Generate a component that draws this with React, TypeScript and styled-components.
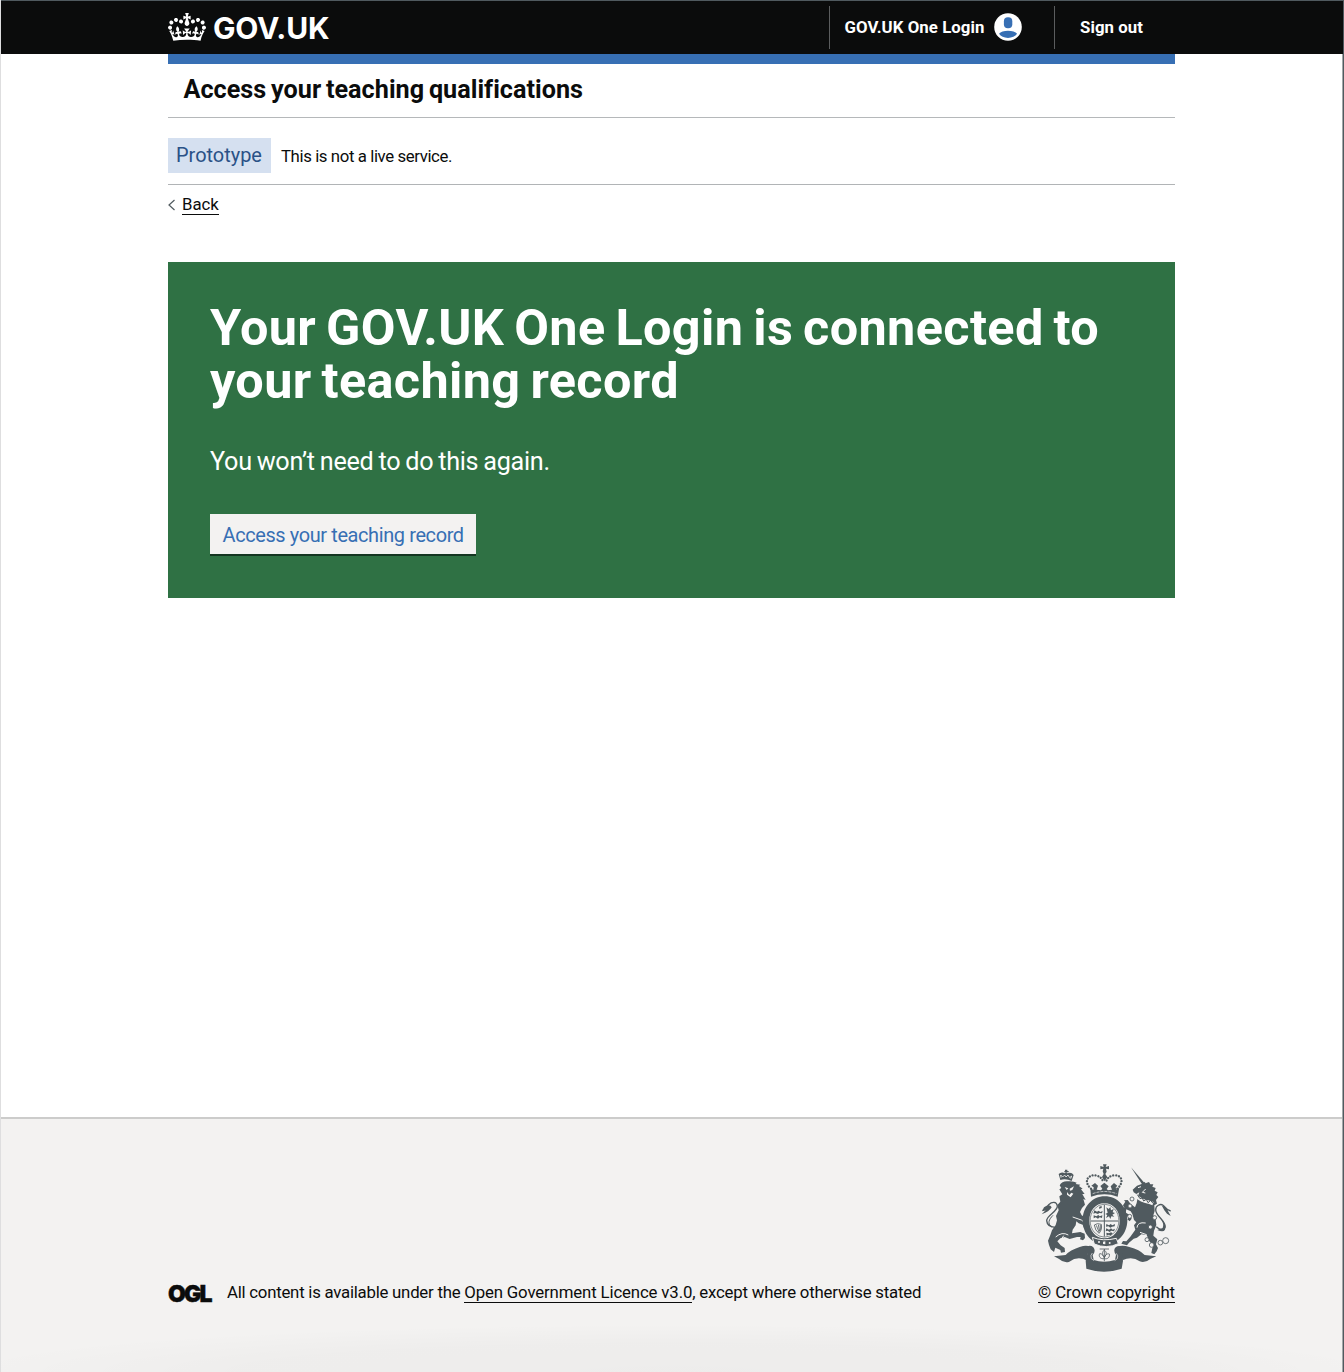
import React from 'react';
import styled, { createGlobalStyle } from 'styled-components';

const GlobalStyle = createGlobalStyle`
  *, *::before, *::after { box-sizing: border-box; }
  body {
    margin: 0;
    background: #fff;
    color: #0b0c0c;
    font-family: Roboto, "Noto Sans", sans-serif;
  }
`;

const Page = styled.div`
  display: flex;
  flex-direction: column;
  height: 1372px;
  padding-right: 1px;
  overflow: hidden;
  background: linear-gradient(to left, #a3a7a9 1px, #fff 1px);
  border-left: 1px solid #dededf;
  border-right: 1px solid #505a5f;
`;

const Container = styled.div`
  width: 1007px;
  margin-left: 167px;
`;

const Header = styled.header`
  height: 54px;
  margin: 0 -1px;
  padding-left: 1px;
  background: #0b0c0c;
  border-top: 1px solid #505a5f;
`;

const HeaderRow = styled(Container)`
  display: flex;
  height: 53px;
  padding-top: 5px;
`;

const Logo = styled.a`
  display: flex;
  align-items: center;
  height: 41px;
  margin-right: auto;
  color: #fff;

  svg { display: block; fill: currentColor; }
`;

const LogoText = styled.span`
  margin-left: 7px;
  margin-top: 2px;
  font-family: Inter, sans-serif;
  font-size: 30px;
  font-weight: 650;
  line-height: 40px;
  letter-spacing: -0.2px;
`;

const NavItem = styled.a<{ $width: number; $indent: number }>`
  display: flex;
  align-items: center;
  width: ${p => p.$width}px;
  height: 43px;
  padding-bottom: 1px;
  padding-left: ${p => p.$indent}px;
  border-left: 1px solid #5b5d5e;
  color: #fff;
  font-size: 16.8px;
  font-weight: 700;
  letter-spacing: 0.06px;

  svg { margin-left: 10px; }
`;

const ServiceBar = styled(Container)`
  height: 64px;
  padding: 10px 16px 0 15.5px;
  border-top: 10px solid #376fb4;
  border-bottom: 1px solid #b5b8ba;
`;

const ServiceName = styled.div`
  font-size: 25.2px;
  font-weight: 700;
  line-height: 31px;
  letter-spacing: 0.02px;
  word-spacing: -1.5px;
`;

const PhaseBanner = styled(Container)`
  display: flex;
  align-items: center;
  height: 67px;
  padding-top: 9px;
  border-bottom: 1px solid #b1b4b6;
`;

const Tag = styled.strong`
  height: 35px;
  width: 102.5px;
  margin-right: 10.5px;
  padding-left: 8px;
  background: #d5e0f0;
  color: #2a5287;
  font-size: 19.95px;
  font-weight: 400;
  line-height: 35px;
`;

const SmallText = styled.span<{ $spacing: number }>`
  font-size: 16.8px;
  line-height: 21px;
  letter-spacing: ${p => p.$spacing}px;
`;

const PhaseText = styled(SmallText)`
  padding-top: 2px;
`;

const BackLink = styled(Container)`
  display: flex;
  align-items: flex-start;
  height: 77px;
  padding-top: 9px;

  svg { margin-top: 5px; margin-right: 6px; }
`;

const Underlined = styled(SmallText)`
  display: inline-block;
  border-bottom: 1px solid #0b0c0c;
  line-height: 20px;
`;

const Panel = styled(Container)`
  height: 336px;
  padding: 40px 42px 0;
  background: #2f7144;
  color: #fff;
`;

const PanelTitle = styled.h1`
  margin: 0;
  font-size: 50.4px;
  font-weight: 700;
  line-height: 52.5px;
  letter-spacing: 0.37px;
  word-spacing: -3px;
`;

const PanelBody = styled.p`
  margin: 37px 0 0;
  font-size: 25.2px;
  line-height: 36px;
  letter-spacing: -0.28px;
  word-spacing: -1px;
`;

const StartButton = styled.button`
  display: block;
  width: 266px;
  height: 40px;
  margin: 34px 0 0;
  padding: 0 0 0 12.5px;
  border: 0;
  background: #f3f2f1;
  box-shadow: 0 2px 0 #143521;
  color: #376fb4;
  font: 400 19.95px/42px Roboto, sans-serif;
  letter-spacing: -0.38px;
  text-align: left;
`;

const Footer = styled.footer`
  flex: none;
  height: 255px;
  margin-top: auto;
  border-top: 2px solid #cccccb;
  background:
    radial-gradient(ellipse 720px 48px at 50% 100%, rgba(0, 0, 0, 0.025), rgba(0, 0, 0, 0.018) 60%, transparent),
    #f3f2f1;
`;

const FooterRow = styled(Container)`
  display: flex;
  align-items: flex-end;
  height: 184px;
`;

const Ogl = styled.span`
  width: 59px;
  font-family: Inter, sans-serif;
  font-size: 23px;
  font-weight: 900;
  line-height: 18px;
  letter-spacing: -1.8px;
  -webkit-text-stroke: 0.4px #0b0c0c;
`;

const Licence = styled.div`
  display: flex;
  margin-right: auto;
  white-space: pre;
`;

const Copyright = styled.div`
  display: flex;
  flex-direction: column;
  align-items: flex-end;

  svg { display: block; margin: 0 3px 9px 0; }
`;

function Crown() {
  return (
    <svg width="38" height="28" viewBox="0 0 132 97">
      <path d="M25 30.2c3.5 1.5 7.7-.2 9.1-3.7 1.5-3.6-.2-7.8-3.9-9.2-3.6-1.4-7.6.3-9.1 3.9-1.4 3.5.3 7.5 3.9 9zM9 39.5c3.6 1.5 7.8-.2 9.2-3.7 1.5-3.6-.2-7.8-3.9-9.1-3.6-1.5-7.6.2-9.1 3.8-1.4 3.5.3 7.5 3.8 9zM4.4 57.2c3.5 1.5 7.7-.2 9.1-3.8 1.5-3.6-.2-7.7-3.9-9.1-3.5-1.5-7.6.3-9.1 3.8-1.4 3.5.3 7.6 3.9 9.1zm38.3-21.4c3.5 1.5 7.7-.2 9.1-3.8 1.5-3.6-.2-7.7-3.9-9.1-3.6-1.5-7.6.3-9.1 3.8-1.3 3.6.4 7.7 3.9 9.1zm64.4-5.6c-3.6 1.5-7.8-.2-9.1-3.7-1.5-3.6.2-7.8 3.8-9.2 3.6-1.4 7.7.3 9.2 3.9 1.3 3.5-.4 7.5-3.9 9zm15.9 9.3c-3.6 1.5-7.7-.2-9.1-3.7-1.5-3.6.2-7.8 3.7-9.1 3.6-1.5 7.7.2 9.2 3.8 1.5 3.5-.3 7.5-3.8 9zm4.7 17.7c-3.6 1.5-7.8-.2-9.2-3.8-1.5-3.6.2-7.7 3.9-9.1 3.6-1.5 7.7.3 9.2 3.8 1.3 3.5-.4 7.6-3.9 9.1zM89.3 35.8c-3.6 1.5-7.8-.2-9.2-3.8-1.4-3.6.2-7.7 3.9-9.1 3.6-1.5 7.7.3 9.2 3.8 1.4 3.6-.3 7.7-3.9 9.1zM69.7 17.7l8.9 4.7V9.3l-8.9 2.8c-.2-.3-.5-.6-.9-.9L72.4 0H59.6l3.5 11.2c-.3.3-.6.5-.9.9l-8.8-2.8v13.1l8.8-4.7c.3.3.6.7.9.9l-5 15.4v.1c-.2.8-.4 1.6-.4 2.4 0 4.1 3.1 7.5 7 8.1h.2c.3 0 .7.1 1 .1.4 0 .7 0 1-.1h.2c4-.6 7.1-4.1 7.1-8.1 0-.8-.1-1.7-.4-2.4V34l-5.1-15.4c.4-.2.7-.6 1-.9zM66 92.8c16.9 0 32.8 1.1 47.1 3.2 4-16.9 8.9-26.7 14-33.5l-9.6-3.4c1 4.9 1.1 7.2 0 10.2-1.5-1.4-3-4.3-4.2-8.7L108.6 76c2.8-2 5-3.2 7.5-3.3-4.4 9.4-10 11.9-13.6 11.2-4.3-.8-6.3-4.6-5.6-7.9 1-4.7 5.7-5.9 8-.5 4.3-8.7-3-11.4-7.6-8.8 7.1-7.2 7.9-13.5 2.1-21.1-8 6.1-8.1 12.3-4.5 20.8-4.7-5.4-12.1-2.5-9.5 6.2 3.4-5.2 7.9-2 7.2 3.1-.6 4.3-6.4 7.8-13.5 7.2-10.3-.9-10.9-8-11.2-13.8 2.5-.5 7.1 1.8 11 7.3L80.2 60c-4.1 4.4-8 5.3-12.3 5.4 1.4-4.4 8-11.6 8-11.6H55.5s6.4 7.2 7.9 11.6c-4.2-.1-8-1-12.3-5.4l1.4 16.4c3.9-5.5 8.5-7.7 10.9-7.3-.3 5.8-.9 12.8-11.1 13.8-7.2.6-12.9-2.9-13.5-7.2-.7-5 3.8-8.3 7.1-3.1 2.7-8.7-4.6-11.6-9.4-6.2 3.7-8.5 3.6-14.7-4.6-20.8-5.8 7.6-5 13.9 2.2 21.1-4.7-2.6-11.9.1-7.7 8.8 2.3-5.5 7.1-4.2 8.1.5.7 3.3-1.3 7.1-5.7 7.9-3.5.7-9-1.8-13.5-11.2 2.5.1 4.7 1.3 7.5 3.3l-4.7-15.4c-1.2 4.4-2.7 7.2-4.3 8.7-1.1-3-.9-5.3 0-10.2l-9.5 3.4c5 6.9 9.9 16.7 14 33.5 14.8-2.1 30.8-3.2 47.7-3.2z" />
    </svg>
  );
}

function AccountIcon() {
  return (
    <svg width="28" height="28" viewBox="0 0 28 28">
      <circle cx="14" cy="14" r="13.8" fill="#fff" />
      <rect x="9.9" y="4.2" width="8.4" height="11" rx="4" fill="#376fb4" />
      <path d="M5 20.8C6.5 18.6 10 17.7 14 17.7s7.6.9 9.1 3.1C21.3 23.3 18 24.9 14 24.9S6.7 23.3 5 20.8z" fill="#376fb4" />
    </svg>
  );
}

function Crest() {
  return (
    <svg width="132" height="110" viewBox="30 24 396 330" fill="#505a5f" stroke="none">
      {/* lion's crown */}
      <path d="M91 75L86 57Q94 49 105 55L108 50L112 55Q124 50 131 60L125 78Q108 70 91 75z" />
      <path d="M105 44h7v4h4v4h-13v-4h2z" />
      <path d="M93 68L92 60L98 66L104 60L108 66L114 60L119 68L125 63L122 71" fill="none" stroke="#f3f2f1" strokeWidth="2.5" />
      {/* lion */}
      <path d="M89 91Q96 78 113 79Q130 77 140 83L137 87L151 89L147 93L158 101L153 103L164 117L157 117L167 135L160 132L165 149Q154 158 150 171L155 181L169 190L177 202L173 207L178 216L169 213L162 219L158 209L146 205L139 199L137 211L128 224L126 235L151 231L164 236L165 249L159 256L150 253L152 246L141 246L119 252L104 246L91 250L82 259L92 271L104 279L105 291L93 293L91 285L76 278L72 291L62 283L57 270L54 257L61 240L66 226L77 210L81 196L78 183L86 166L82 150L91 140L88 124L97 118L91 108L88 103L94 99z" />
      <path d="M104 96L115 100L110 105M119 101L132 94L127 105L120 107M111 111L118 120L124 113L130 116L122 127L111 119z" fill="#f3f2f1" />
      <path d="M128 186L154 195L167 205M77 246Q96 229 115 240M94 253L101 242" fill="none" stroke="#f3f2f1" strokeWidth="3" />
      <path d="M75 217C59 216 51 208 50 197C49 181 84 169 82 153C80 139 66 140 56 149C48 159 51 164 38 166" fill="none" stroke="#505a5f" strokeWidth="4" />
      <path d="M65 216C51 205 57 193 69 181" fill="none" stroke="#505a5f" strokeWidth="3" />
      <path d="M42 157Q59 145 65 157Q58 170 35 178L47 166L36 169z" />
      {/* royal crown */}
      <path d="M219 28h11l-3 8 10-3v10l-9-2 2 9-4 7 6 9-8 13-8-13 5-9-3-8 2-8-9 2V33l10 3z" />
      <path d="M183 101C158 78 176 58 197 61Q214 64 220 81M262 101C286 78 272 58 251 61Q233 64 228 81" fill="none" stroke="#505a5f" strokeWidth="7" strokeLinecap="round" strokeDasharray="0.1 8.6" />
      <path d="M181 98L190 105L191 97L184 92L195 84L204 92L200 104L213 106L217 101L211 93L223 83L236 94L230 102L234 106L246 104L242 94L252 84L262 92L257 98L260 104L268 97L263 125Q223 111 183 125z" />
      <path d="M188 116Q223 103 260 116" fill="none" stroke="#f3f2f1" strokeWidth="2" strokeDasharray="9 3" />
      {/* garter and shield */}
      <path fillRule="evenodd" d="M224 124C263 124 292 156 292 195C292 238 262 268 224 268C187 268 158 238 158 195C158 156 187 124 224 124zM223 145C196 145 178 168 178 197C178 227 197 250 223 250C251 250 269 227 269 197C269 168 251 145 223 145z" />
      <ellipse cx="223.500" cy="197" rx="43" ry="49.500" fill="none" stroke="#505a5f" strokeWidth="2" />
      <path d="M182 198H265M223 149V245" fill="none" stroke="#505a5f" strokeWidth="3" />
      <path d="M193 166l8 4 5-3 5 4 7-3-2 7-8-1-4 3-8-3-6 2zM191 181l8 3 6-4 4 4 8-3-1 8-7-2-5 4-7-4-6 3zM208 155l7-2v6l-8 2zM229 157l7 5 5-6 2 10 8-4-3 10 7 2-8 5 6 6-9-1-3 8-4-8-9 5 4-9-6-3 7-4z" />
      <path d="M229 207l8 4 5-4 5 4 8-4-1 7-8 1-5 3-6-4-7 1zM229 220l8 4 6-4 5 4 7-3-3 8-8-2-5 4-6-4-6 2zM229 233l8 2 6-3 5 3-5 6-7-2-6 3z" />
      <path d="M193 210Q201 203 214 208Q217 225 207 235Q195 227 193 210M199 211L207 231M205 209L209 229M211 210L211 226" fill="none" stroke="#505a5f" strokeWidth="2.5" />
      <path d="M187 247Q219 260 259 250L265 266Q229 283 193 267z" stroke="#f3f2f1" strokeWidth="3" />
      <g fill="#f3f2f1"><circle cx="207" cy="261" r="3" /><path d="M219 260l7-1v9l-7-1z" /><circle cx="239" cy="264" r="3" /></g>
      {/* unicorn */}
      <path d="M303 37L346 87L338 91z" />
      <path d="M308 104L321 92L337 86L345 80L346 85L357 81L361 88L370 88L367 95L377 99L374 107L383 112L379 120L385 126L378 135L381 146L373 151L374 168L370 181L377 193L379 210L372 227L370 242L382 253L378 268L384 279L380 289L373 298L364 294L367 279L371 271L359 260L350 240L334 238L321 248L311 251L297 263L291 271L274 266L279 258L289 259L301 245L316 224L312 211L319 202L312 195L307 177L302 169L289 163L287 173L300 180L305 191L299 199L292 193L297 187L279 178L277 166L283 158L279 151L286 140L282 136L293 135L302 147L315 157L320 144L324 123L328 112L319 117L311 112z" />
      <path d="M320 124Q333 137 355 141L369 146" fill="none" stroke="#f3f2f1" strokeWidth="10" />
      <path d="M322 119l8 12 7-2 4 9 8-5 5 10 8-7 7 9" fill="none" stroke="#505a5f" strokeWidth="3" />
      <path d="M333 95l-9 3M347 102l-10 10 9 2M347 204Q322 200 321 218M350 239L330 232" fill="none" stroke="#f3f2f1" strokeWidth="3" />
      <path d="M379 215C396 232 409 221 404 208C397 190 378 182 377 164C377 152 391 145 399 151C408 158 409 165 422 168" fill="none" stroke="#505a5f" strokeWidth="4" />
      <path d="M396 153Q409 151 415 170L422 183L411 176L403 166zM392 190Q411 207 405 224Q400 233 382 225L398 219Q403 207 392 190z" />
      {/* chain */}
      <g fill="#f3f2f1" stroke="#505a5f" strokeWidth="2.5">
        <circle cx="306" cy="132" r="6" /><circle cx="300" cy="153" r="6" /><circle cx="299" cy="184" r="6" />
        <circle cx="374" cy="188" r="6" /><circle cx="361" cy="216" r="6" /><circle cx="351" cy="254" r="6" />
        <circle cx="365" cy="270" r="7" /><circle cx="391" cy="263" r="7" /><circle cx="407" cy="257" r="9" />
      </g>
      {/* ribbon */}
      <path d="M72 304L107 300Q120 285 149 276Q181 265 185 286L173 294L172 317Q144 301 118 320Q103 326 86 311zM379 304L344 300Q329 284 298 276Q262 265 258 287L274 295L277 316Q306 302 329 319Q344 326 362 311z" />
      <path d="M160 282Q178 266 190 277Q199 288 188 300L191 315Q222 325 255 315L258 299Q248 286 257 277Q268 267 287 281L276 296L279 318L275 341Q222 359 169 341L167 317L172 296z" />
      <path d="M187 294Q180 300 184 311L192 317M259 295Q266 302 262 311L254 317" stroke="#f3f2f1" strokeWidth="2" fill="none" />
      <path d="M209 282H237M223 282V319M223 311C211 313 205 304 209 296C216 295 220 302 223 309C225 301 231 294 238 297C240 307 233 313 223 311M223 306C213 296 219 288 223 285C229 290 232 297 223 306" fill="none" stroke="#505a5f" strokeWidth="2.5" />
    </svg>
  );
}

export default function App() {
  return (
    <>
      <GlobalStyle />
      <Page>
        <Header>
          <HeaderRow>
            <Logo>
              <Crown />
              <LogoText>GOV.UK</LogoText>
            </Logo>
            <NavItem $width={225} $indent={14.5}>
              GOV.UK One Login
              <AccountIcon />
            </NavItem>
            <NavItem $width={121} $indent={25}>Sign out</NavItem>
          </HeaderRow>
        </Header>
        <ServiceBar>
          <ServiceName>Access your teaching qualifications</ServiceName>
        </ServiceBar>
        <PhaseBanner>
          <Tag>Prototype</Tag>
          <PhaseText $spacing={-0.4}>This is not a live service.</PhaseText>
        </PhaseBanner>
        <BackLink>
          <svg width="8" height="12" viewBox="0 0 8 12">
            <path d="M6.5 1L1 6l5.500 5" fill="none" stroke="#505a5f" strokeWidth="1.2" />
          </svg>
          <Underlined $spacing={0}>Back</Underlined>
        </BackLink>
        <Panel>
          <PanelTitle>Your GOV.UK One Login is connected to your teaching record</PanelTitle>
          <PanelBody>You won’t need to do this again.</PanelBody>
          <StartButton>Access your teaching record</StartButton>
        </Panel>
        <Footer>
          <FooterRow>
            <Ogl>OGL</Ogl>
            <Licence>
              <SmallText $spacing={-0.24}>All content is available under the </SmallText>
              <Underlined $spacing={-0.14}>Open Government Licence v3.0</Underlined>
              <SmallText $spacing={-0.2}>, except where otherwise stated</SmallText>
            </Licence>
            <Copyright>
              <Crest />
              <Underlined $spacing={-0.12}>© Crown copyright</Underlined>
            </Copyright>
          </FooterRow>
        </Footer>
      </Page>
    </>
  );
}
